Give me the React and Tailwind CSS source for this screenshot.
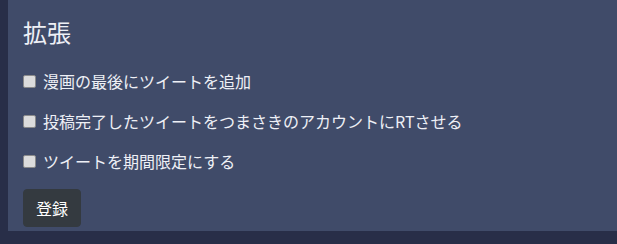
export default function App() {
  const options = [
    "漫画の最後にツイートを追加",
    "投稿完了したツイートをつまさきのアカウントにRTさせる",
    "ツイートを期間限定にする",
  ];

  return (
    <div
      className="flex h-[244px] w-[617px] flex-col bg-[#282e48] pl-2"
      style={{ fontFamily: '"Noto Sans CJK JP", "Noto Sans", sans-serif' }}
    >
      <div className="flex flex-col bg-[#404b69] px-[15px] pt-[17px] pb-1 text-[#eef0f6]">
        <h4 className="mb-[23px] text-[24px] leading-[29px]">拡張</h4>

        {options.map((label) => (
          <label key={label} className="mb-4 flex h-6 items-center text-[16px] leading-6">
            <input
              type="checkbox"
              className="mr-[7px] h-[13px] w-[13px] appearance-none rounded-[2px] border border-[#8a8a8a] bg-[#dcdcdc]"
            />
            <span>{label}</span>
          </label>
        ))}

        <div>
          <button className="h-[38px] rounded-[4px] border border-[#343a40] bg-[#343a40] px-3 text-[16px] text-white">
            登録
          </button>
        </div>
      </div>
    </div>
  );
}
